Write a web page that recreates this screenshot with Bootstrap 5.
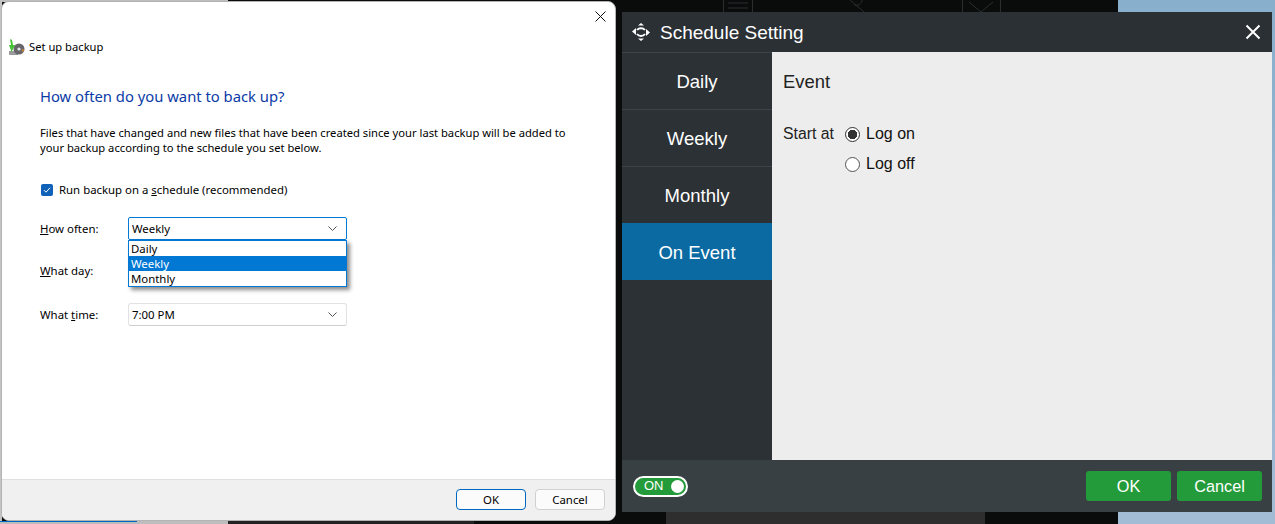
<!doctype html>
<html lang="en">
<head>
  <meta charset="utf-8" />
  <meta name="viewport" content="width=device-width, initial-scale=1" />
  <title>Schedule Setting</title>
  <link href="https://cdn.jsdelivr.net/npm/bootstrap@5.3.0/dist/css/bootstrap.min.css" rel="stylesheet" />
  <style>
    html, body { height: 524px; overflow: hidden; }
    body { background: #0a0c0c; }
    .desk { position: relative; width: 1275px; height: 524px; overflow: hidden; }
    .desk-sky { position: absolute; left: 1118px; top: 0; width: 157px; height: 524px; background: linear-gradient(#88afcc, #a2bcd5); }
    .desk-lines { position: absolute; left: 0; top: 0; }

    /* backup window */
    .win-backup {
      position: absolute; left: 1px; top: 1px; width: 615px; height: 520px;
      background: #fff; border: 1px solid #b4b4b4; border-radius: 8px; overflow: hidden;
      font-family: "Noto Sans", sans-serif; font-size: 11.2px; color: #000;
    }
    .backup-body { padding: 35px 38px 0; height: 477px; position: relative; }
    .backup-close { position: absolute; left: 592px; top: 8px; }
    .backup-title { margin-left: -32px; height: 20px; gap: 4px; }
    .backup-heading { color: #0b3ba6; font-size: 14.8px; margin: 29px 0 0; line-height: 20px; }
    .backup-text { margin: 19px 0 0; line-height: 15px; width: 540px; }
    .backup-check { margin-top: 27px; height: 16px; gap: 6px; padding-left: 1px; font-size: 11.4px; }
    .tick-box { width: 12px; height: 12px; background: #0f62b8; border-radius: 2px; }
    .opt-row { height: 23px; margin-top: 19px; font-size: 11.4px; }
    .opt-row-last { margin-top: 21px; }
    .opt-row label { width: 88px; }
    .fake-select {
      width: 219px; height: 23px; border: 1px solid #e2e2e2; border-bottom-color: #cfcfcf; border-radius: 3px;
      padding: 0 9px 0 3px;
    }
    .fake-select.is-open { border-color: #0078d4; border-radius: 2px; }
    .drop-list {
      position: absolute; left: 126px; top: 238px; width: 219px; height: 47px;
      background: #fff; border: 1px solid #0078d4; box-shadow: 3px 3px 4px rgba(0,0,0,.45);
      line-height: 15px; font-size: 11.4px;
    }
    .drop-list div { height: 15px; padding-left: 2px; }
    .drop-list .is-picked { background: #0078d4; color: #fff; }
    .backup-foot {
      height: 41px; background: #f0f0f0; border-top: 1px solid #dfdfdf;
      padding: 9px 10px 0 0; gap: 9px;
    }
    .win-btn {
      width: 70px; height: 21px; padding: 0; font-size: 11.4px; line-height: 18px; color: #000;
      background: #fbfbfb; border: 1px solid #d0d0d0; border-radius: 4px;
    }
    .win-btn.is-default { border-color: #0067c0; }

    /* schedule window */
    .win-sched {
      position: absolute; left: 622px; top: 12px; width: 650px; height: 500px;
      font-family: "Liberation Sans", sans-serif; color: #fff; background: #2c3136;
    }
    .sched-head { height: 40px; background: #2b3035; padding: 0 11px 0 10px; }
    .sched-title { font-size: 19px; margin-left: 10px; padding-top: 2px; }
    .sched-main { height: 408px; }
    .sched-side { width: 150px; background: #2c3136; }
    .side-item {
      height: 57px; font-size: 18.5px; border-top: 1px solid #3d4348; padding-top: 1px;
    }
    .side-item.is-active { background: #0b6aa2; border-top-color: #0b6aa2; }
    .sched-pane { background: #ededed; color: #222; padding: 19px 11px; font-size: 16px; }
    .pane-title { font-size: 18.4px; line-height: 22px; }
    .pane-row { margin-top: 30px; }
    .pane-label { width: 62px; line-height: 22px; font-size: 15.8px; }
    .pane-radio { height: 30px; gap: 6px; color: #111; }
    .pane-radio:first-child { margin-top: -4px; }
    .radio-dot {
      width: 15px; height: 15px; border-radius: 50%; background: #fff; border: 1px solid #555;
    }
    .radio-dot.is-on { border-color: #333; background: radial-gradient(circle, #333 0 4.5px, #fff 5px); }
    .sched-foot { height: 52px; background: #394044; padding: 0 10px 0 11px; gap: 6px; }
    .on-switch {
      width: 55px; height: 21px; border: 2px solid #fff; border-radius: 11px; background: #249b3a;
      font-size: 13px; padding: 0 2px 0 9px;
    }
    .on-knob { width: 13px; height: 13px; background: #fff; border-radius: 50%; }
    .green-btn {
      width: 85px; height: 30px; padding: 0; background: #249b3a; border: 0; border-radius: 3px;
      color: #fff; font-size: 16.3px;
    }
  </style>
</head>
<body>
  <div class="desk">
    <div class="desk-sky"></div>

    <svg class="desk-lines" width="1275" height="524" viewBox="0 0 1275 524" fill="none">
      <rect x="0" y="0" width="228" height="2" fill="#bdbdbd"/>
      <rect x="0" y="0" width="2" height="524" fill="#c4c4c4"/>
      <rect x="0" y="521" width="228" height="3" fill="#bdbdbd"/>
      <rect x="0" y="521" width="137" height="1" fill="#0067c0"/>
      <rect x="228" y="521" width="246" height="3" fill="#232323"/>
      <rect x="666" y="512" width="319" height="12" fill="#2e2e2e"/>
      <g stroke="#2a2e2e">
        <path d="M723.500 0v12M752.500 0v12M728 3h20M728 8h20"/>
        <path d="M850 0l14 12M862 0c0 4-4 6-8 5"/>
        <path d="M962.500 0v12M1000.500 0v12M969 2l12 10 12-10"/>
      </g>
    </svg>

    <div class="win-backup d-flex flex-column">
      <div class="backup-body">
        <svg class="backup-close" width="13" height="13" viewBox="0 0 13 13"><path d="M1.500 1.500l10 10M11.500 1.500l-10 10" stroke="#111" stroke-width="1" fill="none"/></svg>
        <div class="backup-title d-flex align-items-center">
          <svg width="17" height="17" viewBox="0 0 17 17">
            <path d="M1 12h9v4H2a1 1 0 0 1-1-1z" fill="#9a9a9a"/>
            <circle cx="11" cy="10" r="5.500" fill="#66666a"/>
            <circle cx="11" cy="10" r="1.600" fill="#e4e4e4"/>
            <path d="M14 10l2.500 1-2.500 2z" fill="#d9822b"/>
            <path d="M2 0l2 1 1 5h2l-3.500 7L1 6h2z" fill="#45c235"/>
          </svg>
          <span>Set up backup</span>
        </div>
        <h1 class="backup-heading fw-normal">How often do you want to back up?</h1>
        <p class="backup-text">Files that have changed and new files that have been created since your last backup will be added to your backup according to the schedule you set below.</p>
        <div class="backup-check d-flex align-items-center">
          <span class="tick-box d-flex align-items-center justify-content-center">
            <svg width="8" height="8" viewBox="0 0 8 8"><path d="M1 4.200l2 2 4-4.400" stroke="#fff" stroke-width="1" fill="none"/></svg>
          </span>
          <span>Run backup on a <u>s</u>chedule (recommended)</span>
        </div>
        <div class="opt-row d-flex align-items-center">
          <label><u>H</u>ow often:</label>
          <div class="fake-select is-open d-flex align-items-center justify-content-between">
            <span>Weekly</span>
            <svg width="9" height="5" viewBox="0 0 9 5"><path d="M.5.5l4 4 4-4" stroke="#555" fill="none"/></svg>
          </div>
        </div>
        <div class="opt-row d-flex align-items-center">
          <label><u>W</u>hat day:</label>
        </div>
        <div class="opt-row opt-row-last d-flex align-items-center">
          <label>What <u>t</u>ime:</label>
          <div class="fake-select d-flex align-items-center justify-content-between">
            <span>7:00 PM</span>
            <svg width="9" height="5" viewBox="0 0 9 5"><path d="M.5.5l4 4 4-4" stroke="#555" fill="none"/></svg>
          </div>
        </div>
        <div class="drop-list">
          <div>Daily</div>
          <div class="is-picked">Weekly</div>
          <div>Monthly</div>
        </div>
      </div>
      <div class="backup-foot d-flex justify-content-end">
        <button class="win-btn is-default" type="button">OK</button>
        <button class="win-btn" type="button">Cancel</button>
      </div>
    </div>

    <div class="win-sched d-flex flex-column">
      <div class="sched-head d-flex align-items-center">
        <svg width="18" height="18" viewBox="0 0 18 18" fill="#fff">
          <path d="M9 0l3 2.500H6zM9 18l-3-2.500h6z"/>
          <path d="M0 8.500l4-3.500v7zM18 9.500l-4 3.500V6z"/>
          <path d="M5 7c2-2.500 6-2.500 8 0M5 11c2 2.500 6 2.500 8 0" stroke="#fff" stroke-width="2" fill="none"/>
        </svg>
        <span class="sched-title">Schedule Setting</span>
        <svg class="ms-auto" width="16" height="16" viewBox="0 0 16 16"><path d="M1.500 1.500l13 13M14.500 1.500l-13 13" stroke="#fff" stroke-width="2" fill="none"/></svg>
      </div>
      <div class="sched-main d-flex">
        <div class="sched-side">
          <div class="side-item d-flex align-items-center justify-content-center">Daily</div>
          <div class="side-item d-flex align-items-center justify-content-center">Weekly</div>
          <div class="side-item d-flex align-items-center justify-content-center">Monthly</div>
          <div class="side-item is-active d-flex align-items-center justify-content-center">On Event</div>
        </div>
        <div class="sched-pane flex-grow-1">
          <div class="pane-title">Event</div>
          <div class="pane-row d-flex">
            <div class="pane-label">Start at</div>
            <div>
              <div class="pane-radio d-flex align-items-center"><span class="radio-dot is-on"></span><span>Log on</span></div>
              <div class="pane-radio d-flex align-items-center"><span class="radio-dot"></span><span>Log off</span></div>
            </div>
          </div>
        </div>
      </div>
      <div class="sched-foot d-flex align-items-center">
        <div class="on-switch d-flex align-items-center justify-content-between me-auto">
          <span>ON</span><span class="on-knob"></span>
        </div>
        <button class="green-btn" type="button">OK</button>
        <button class="green-btn" type="button">Cancel</button>
      </div>
    </div>
  </div>
  <script src="https://cdn.jsdelivr.net/npm/bootstrap@5.3.0/dist/js/bootstrap.bundle.min.js"></script>
</body>
</html>
